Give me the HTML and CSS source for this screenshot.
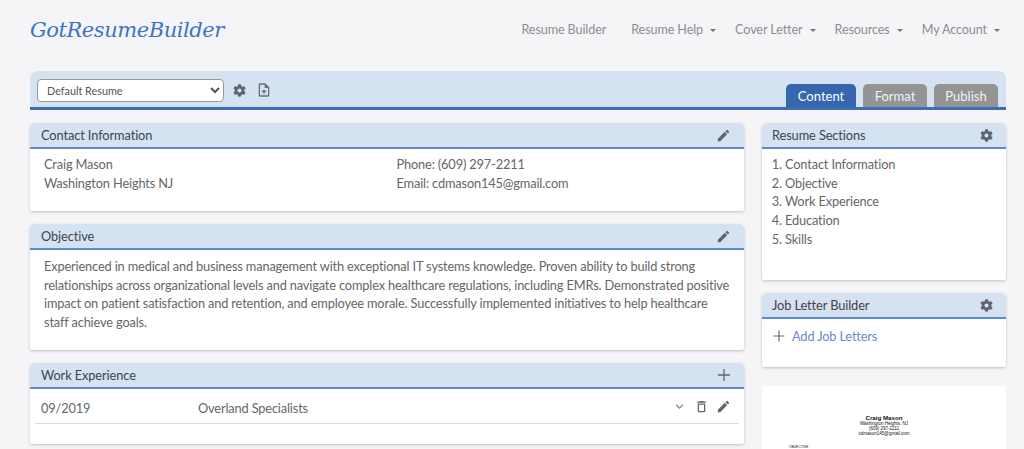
FILE: index.html
```html
<!DOCTYPE html>
<html lang="en">

<head>
  <meta charset="UTF-8">
  <meta name="viewport" content="width=device-width, initial-scale=1.0">
  <title>GotResumeBuilder - Content</title>
  <link rel="stylesheet" href="styles.css">
</head>

<body>
  <svg class="icon-defs" width="0" height="0" aria-hidden="true">
    <symbol id="i-gear" viewBox="0 0 512 512">
      <path d="M487 316l-42-25c4-23 4-47 0-70l42-25c5-3 7-9 5-14-11-35-30-67-54-93-4-4-10-5-15-2l-42 24c-18-15-38-27-60-35V27c0-6-4-11-9-12-36-8-73-8-107 0-6 1-10 6-10 12v49c-22 8-42 20-60 35L93 87c-5-3-11-2-15 2-24 26-43 58-54 93-2 5 0 11 5 14l42 25c-4 23-4 47 0 70l-42 25c-5 3-7 9-5 14 11 35 30 67 54 93 4 4 10 5 15 2l42-24c18 15 38 27 60 35v49c0 6 4 11 10 12 36 8 73 8 107 0 5-1 9-6 9-12v-49c22-8 42-20 60-35l42 24c5 3 11 2 15-2 24-26 43-58 54-93 2-5 0-11-5-14zM256 336c-44 0-80-36-80-80s36-80 80-80 80 36 80 80-36 80-80 80z"/>
    </symbol>
    <symbol id="i-pencil" viewBox="0 0 24 24">
      <path d="M3 17.25V21h3.75L17.81 9.94l-3.75-3.75L3 17.25zM20.71 7.04a1 1 0 0 0 0-1.41l-2.34-2.34a1 1 0 0 0-1.41 0l-1.83 1.83 3.75 3.75 1.83-1.83z"/>
    </symbol>
    <symbol id="i-plus" viewBox="0 0 24 24">
      <path d="M18.5 12.7h-5.8v5.8h-1.4v-5.8H5.5v-1.4h5.8V5.5h1.4v5.8h5.8z"/>
    </symbol>
    <symbol id="i-trash" viewBox="0 0 24 24">
      <path d="M6 19c0 1.1.9 2 2 2h8a2 2 0 0 0 2-2V7H6v12zM8 9h8v10H8V9zm7.5-5-1-1h-5l-1 1H5v2h14V4h-3.5z"/>
    </symbol>
    <symbol id="i-chevron" viewBox="0 0 24 24">
      <path d="M7.41 8.59 12 13.17l4.59-4.58L18 10l-6 6-6-6 1.41-1.41z"/>
    </symbol>
    <symbol id="i-file" viewBox="0 0 24 24">
      <path d="M14 2H6a2 2 0 0 0-2 2v16a2 2 0 0 0 2 2h12a2 2 0 0 0 2-2V8l-6-6zm4 18H6V4h7v5h5v11zM8 15l4-4 4 4h-3v3h-2v-3H8z"/>
    </symbol>
  </svg>

  <header class="site-header">
    <a class="logo" href="#">GotResumeBuilder</a>
    <nav class="main-nav">
      <a class="nav-first" href="#">Resume Builder</a>
      <a class="has-caret" href="#">Resume Help</a>
      <a class="has-caret" href="#">Cover Letter</a>
      <a class="has-caret" href="#">Resources</a>
      <a class="has-caret" href="#">My Account</a>
    </nav>
  </header>

  <div class="toolbar">
    <select class="resume-select">
      <option>Default Resume</option>
    </select>
    <svg class="tool-icon"><use href="#i-gear"></use></svg>
    <svg class="tool-icon tool-file"><use href="#i-file"></use></svg>
    <div class="tabs">
      <a class="tab active" href="#">Content</a>
      <a class="tab" href="#">Format</a>
      <a class="tab" href="#">Publish</a>
    </div>
  </div>

  <div class="columns">
    <main class="col-main">
      <section class="card card-contact">
        <div class="card-head">
          <h2>Contact Information</h2>
          <svg class="head-icon"><use href="#i-pencil"></use></svg>
        </div>
        <div class="card-body contact-grid">
          <div>Craig Mason<br>Washington Heights NJ</div>
          <div>Phone: (609) 297-2211<br>Email: cdmason145@gmail.com</div>
        </div>
      </section>

      <section class="card card-objective">
        <div class="card-head">
          <h2>Objective</h2>
          <svg class="head-icon"><use href="#i-pencil"></use></svg>
        </div>
        <div class="card-body">
          <p>Experienced in medical and business management with exceptional IT systems knowledge. Proven ability to build strong relationships across organizational levels and navigate complex healthcare regulations, including EMRs. Demonstrated positive impact on patient satisfaction and retention, and employee morale. Successfully implemented initiatives to help healthcare staff achieve goals.</p>
        </div>
      </section>

      <section class="card card-work">
        <div class="card-head">
          <h2>Work Experience</h2>
          <svg class="head-icon head-plus"><use href="#i-plus"></use></svg>
        </div>
        <div class="work-row">
          <span class="work-date">09/2019</span>
          <span class="work-name">Overland Specialists</span>
          <svg class="row-icon row-chevron"><use href="#i-chevron"></use></svg>
          <svg class="row-icon"><use href="#i-trash"></use></svg>
          <svg class="row-icon"><use href="#i-pencil"></use></svg>
        </div>
      </section>
    </main>

    <aside class="col-side">
      <section class="card card-sections">
        <div class="card-head">
          <h2>Resume Sections</h2>
          <svg class="head-icon head-gear"><use href="#i-gear"></use></svg>
        </div>
        <ol class="section-list">
          <li>Contact Information</li>
          <li>Objective</li>
          <li>Work Experience</li>
          <li>Education</li>
          <li>Skills</li>
        </ol>
      </section>

      <section class="card card-letters">
        <div class="card-head">
          <h2>Job Letter Builder</h2>
          <svg class="head-icon head-gear"><use href="#i-gear"></use></svg>
        </div>
        <a class="add-letter" href="#">
          <svg class="add-icon"><use href="#i-plus"></use></svg>
          Add Job Letters
        </a>
      </section>

      <div class="preview">
        <div class="preview-name">Craig Mason</div>
        <div class="preview-line">Washington Heights, NJ</div>
        <div class="preview-line">(609) 297-2211</div>
        <div class="preview-line">cdmason145@gmail.com</div>
        <div class="preview-label">OBJECTIVE</div>
      </div>
    </aside>
  </div>
</body>

</html>
```

FILE: styles.css
```css
* {
  box-sizing: border-box;
  margin: 0;
  padding: 0;
}

html,
body {
  height: 100vh;
  overflow: hidden;
}

body {
  padding: 0 18px 0 30px;
  background: #F5F5F8;
  color: #666;
  font-family: 'Lato', sans-serif;
  font-size: 12.8px;
  letter-spacing: -0.155px;
}

.icon-defs {
  position: absolute;
}

svg {
  fill: currentColor;
}

/* Header */
.site-header {
  display: flex;
  align-items: center;
  justify-content: space-between;
  height: 71px;
  padding-bottom: 12px;
}

.logo {
  width: 196px;
  color: #3A74C8;
  font-family: 'DejaVu Serif', serif;
  font-size: 21px;
  font-style: italic;
  letter-spacing: -0.45px;
  text-decoration: none;
  white-space: nowrap;
}

.main-nav {
  display: flex;
  gap: 25px;
  margin-right: 6px;
}

.main-nav a {
  color: #8B8E93;
  font-size: 12.6px;
  letter-spacing: -0.1px;
  text-decoration: none;
}

.main-nav .nav-first {
  margin-right: 6px;
}

.main-nav .has-caret {
  margin-left: -6px;
}

.main-nav .has-caret::after {
  content: "";
  display: inline-block;
  margin-left: 7px;
  vertical-align: 2px;
  border-top: 3.5px solid #777;
  border-left: 3.5px solid transparent;
  border-right: 3.5px solid transparent;
}

/* Toolbar */
.toolbar {
  display: flex;
  align-items: flex-start;
  height: 39px;
  padding: 8px 8px 0 7px;
  background: #D5E2F2;
  border-bottom: 3px solid #3D6FB0;
  border-radius: 7px 7px 0 0;
}

.resume-select {
  width: 187px;
  height: 23px;
  padding-left: 5px;
  background: #fff;
  border: 1px solid #999;
  border-radius: 4px;
  color: #555;
  font-family: 'Lato', sans-serif;
  font-size: 10.8px;
}

.tool-icon {
  width: 13px;
  height: 13px;
  margin: 5px 0 0 9px;
  color: #5F656C;
}

.tool-file {
  width: 16px;
  height: 16px;
  margin: 3px 0 0 10px;
  color: #6B7077;
}

.tabs {
  display: flex;
  gap: 7px;
  align-self: flex-end;
  margin-left: auto;
}

.tab {
  display: block;
  width: 64px;
  height: 23px;
  padding-top: 4px;
  background: #949494;
  border-radius: 5px 5px 0 0;
  color: #F2F2F2;
  font-size: 13px;
  letter-spacing: 0;
  text-align: center;
  text-decoration: none;
}

.tab.active {
  width: 70px;
  background: #3566AE;
  color: #fff;
}

/* Columns */
.columns {
  display: flex;
  gap: 18px;
  margin-top: 13px;
}

.col-main {
  display: flex;
  flex-direction: column;
  gap: 13px;
  width: 714px;
}

.col-side {
  display: flex;
  flex-direction: column;
  width: 244px;
}

/* Cards */
.card {
  background: #fff;
  border-radius: 5px 5px 2px 2px;
  box-shadow: 0 1px 3px rgba(0, 0, 0, 0.22);
}

.card-head {
  display: flex;
  align-items: center;
  justify-content: space-between;
  height: 26px;
  padding: 0 13px 0 11px;
  background: #D5E2F2;
  border-bottom: 2px solid #5B8BD0;
  border-radius: 5px 5px 0 0;
}

.col-side .card-head {
  padding-left: 10px;
}

.card-head h2 {
  color: #3F444A;
  font-size: 12.8px;
  font-weight: 400;
  letter-spacing: -0.1px;
}

.head-icon {
  width: 15px;
  height: 15px;
  color: #5F656C;
}

.head-gear {
  width: 13px;
  height: 13px;
}

.head-plus {
  width: 22px;
  height: 22px;
  margin-right: -4px;
}

.card-body {
  padding: 7px 14px;
  line-height: 19px;
}

.card-contact {
  height: 88px;
}

.contact-grid {
  display: grid;
  grid-template-columns: 352.5px 1fr;
  padding-top: 6px;
}

.card-objective {
  height: 126px;
}

.card-objective p {
  line-height: 18.7px;
}

.card-work {
  height: 81px;
}

.work-row {
  display: flex;
  align-items: center;
  height: 35px;
  margin: 0 5px;
  padding: 3px 8px 0 6px;
  border-bottom: 1px solid #DDD;
}

.work-date {
  width: 157px;
}

.work-name {
  flex: 1;
}

.row-icon {
  width: 15px;
  height: 15px;
  margin: -2px 0 0 7px;
  color: #666;
}

.row-chevron {
  color: #888;
}

/* Sidebar */
.card-sections {
  height: 157px;
}

.section-list {
  padding: 6px 0 0 23px;
  line-height: 18.7px;
}

.card-letters {
  height: 74px;
  margin-top: 13px;
}

.add-letter {
  display: flex;
  align-items: center;
  gap: 3px;
  padding: 7px 0 0 7px;
  color: #6A8AC8;
  text-decoration: none;
}

.add-icon {
  width: 20px;
  height: 20px;
  color: #666;
}

.preview {
  height: 120px;
  margin-top: 19px;
  padding-top: 28px;
  background: #fff;
  color: #111;
  font-family: 'Liberation Sans', sans-serif;
  letter-spacing: 0;
  text-align: center;
}

.preview-name {
  font-size: 6.2px;
  font-weight: 700;
}

.preview-line {
  font-size: 4.5px;
  line-height: 5px;
}

.preview-label {
  margin: 9px 0 0 27px;
  font-size: 3.5px;
  text-align: left;
}
```
